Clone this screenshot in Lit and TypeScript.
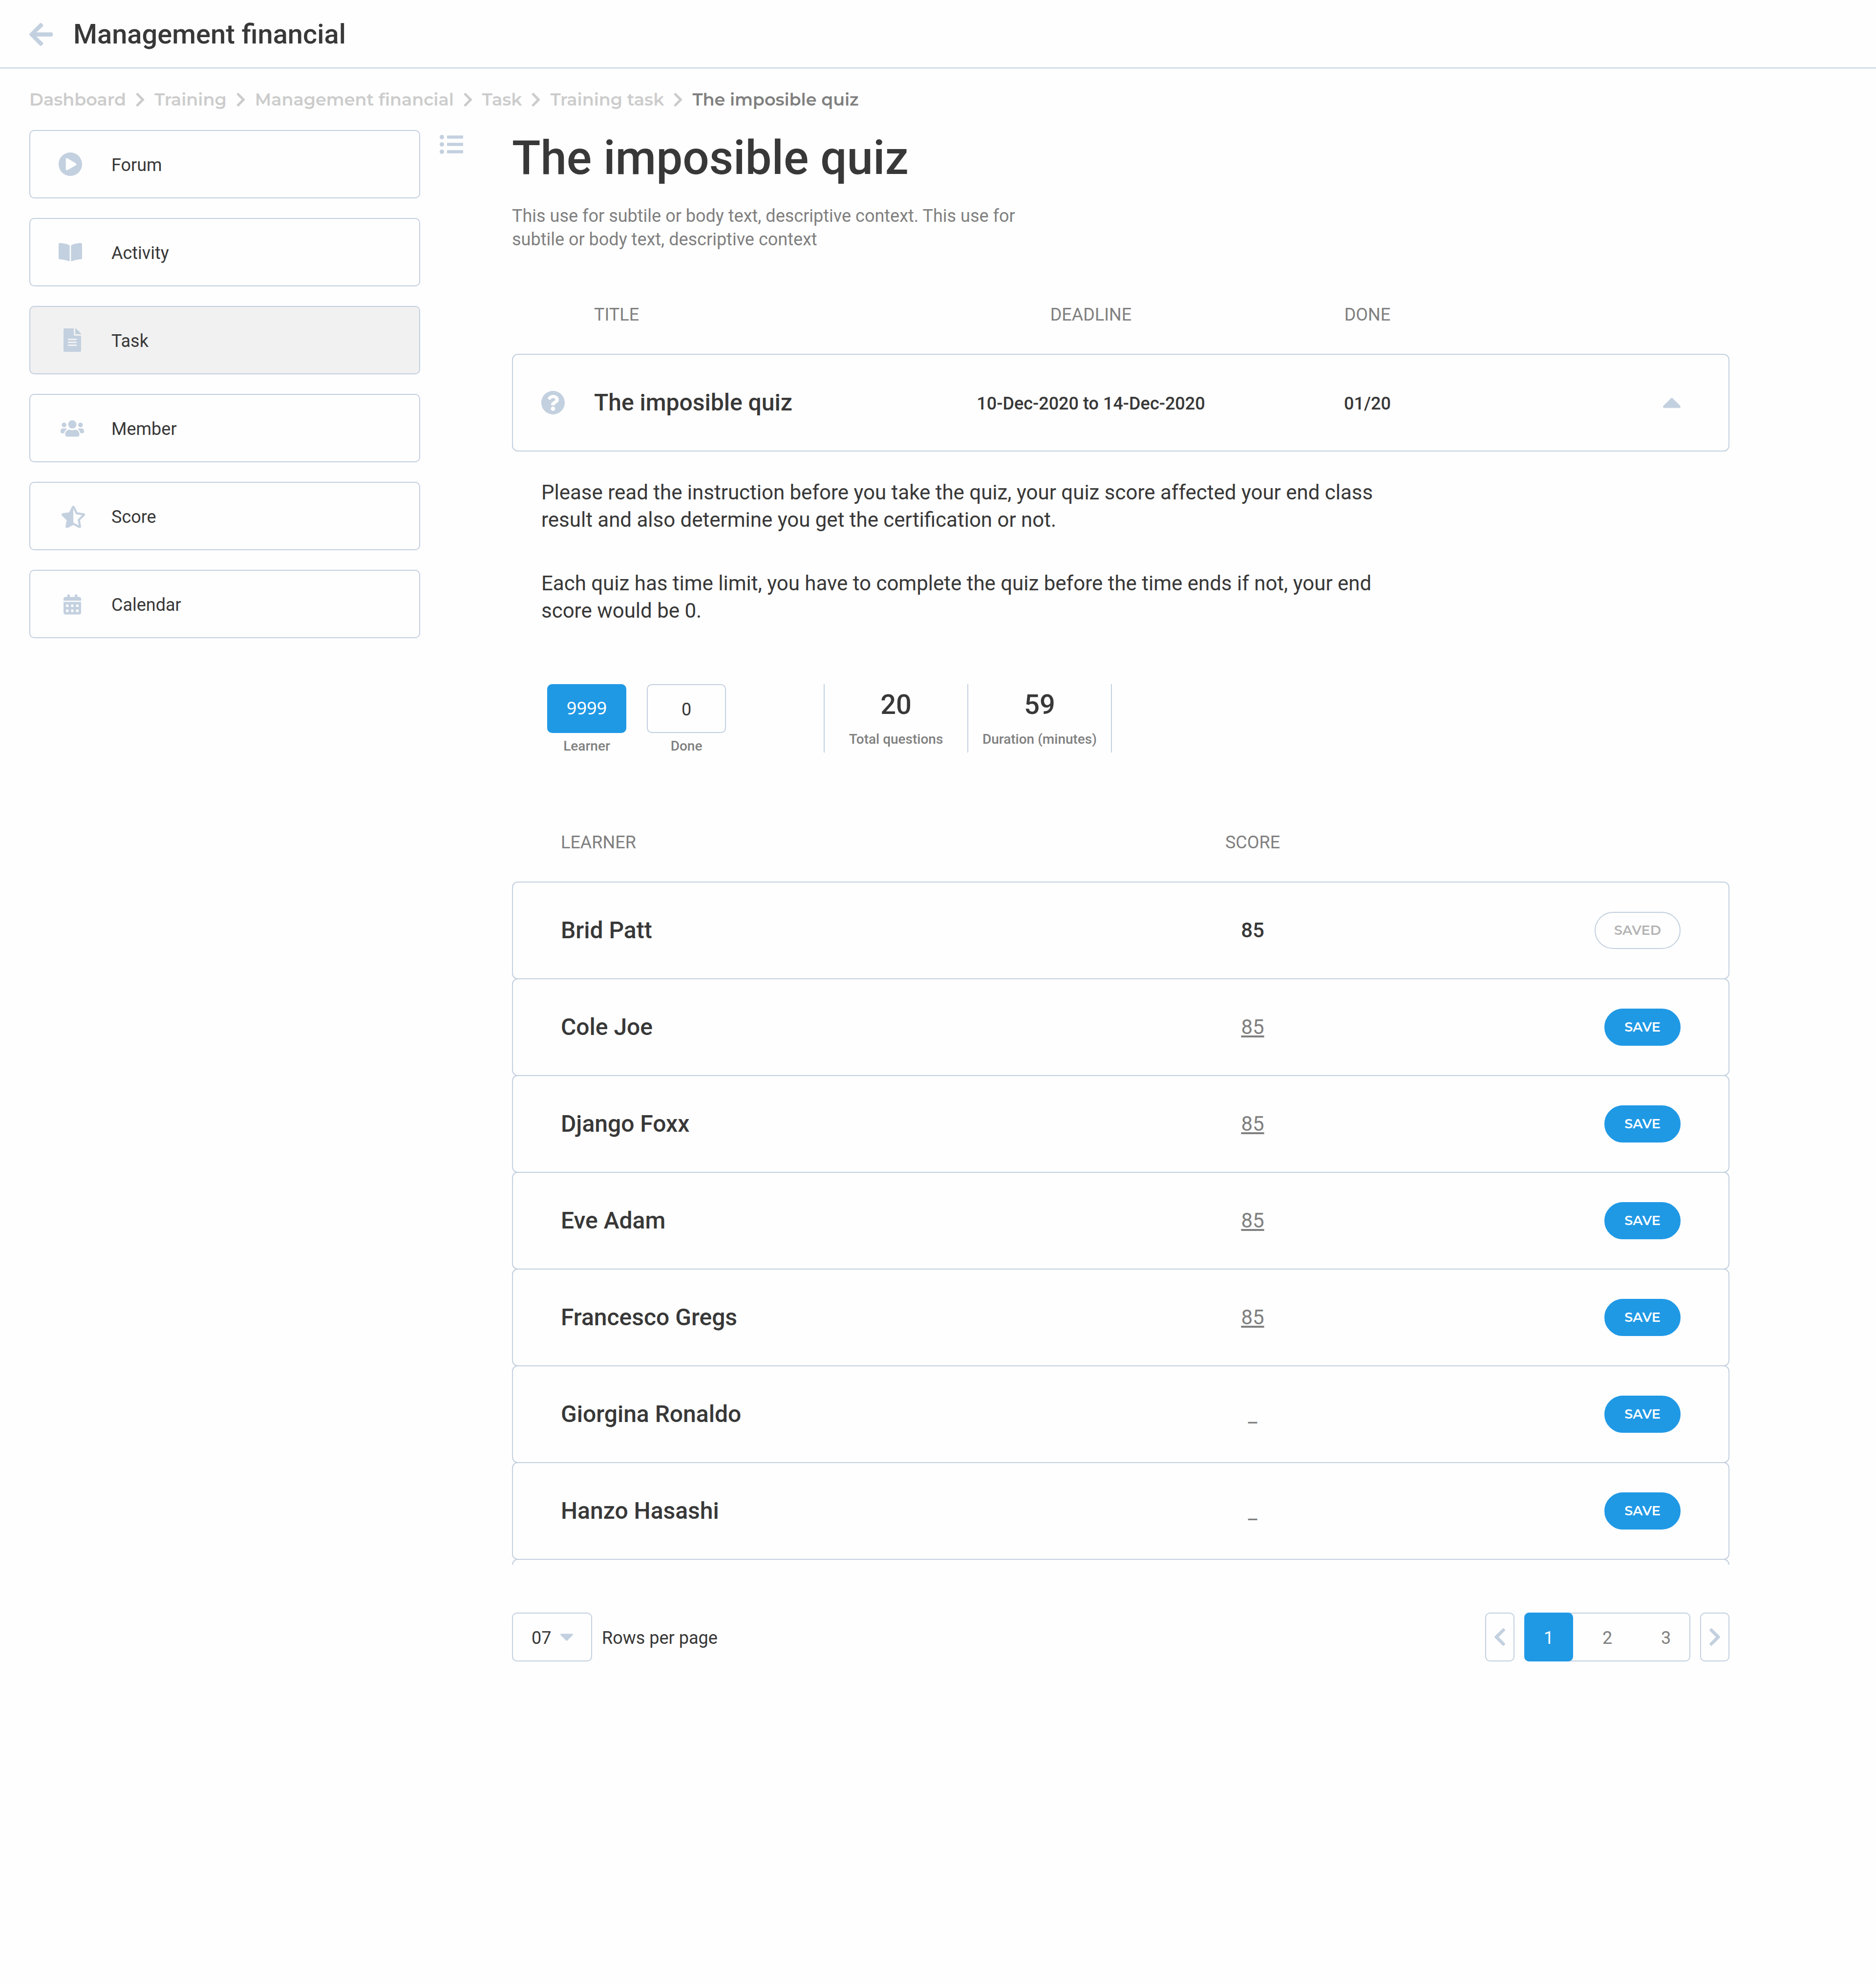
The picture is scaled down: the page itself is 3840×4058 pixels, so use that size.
import { LitElement, html, css, svg, nothing } from "lit";
import { customElement, state } from "lit/decorators.js";
import { classMap } from "lit/directives/class-map.js";

interface Learner {
  name: string;
  score: string;
  saved: boolean;
}

const CHEVRON =
  "M285.476 272.971L91.132 467.314c-9.373 9.373-24.569 9.373-33.941 0l-22.667-22.667c-9.357-9.357-9.375-24.522-.04-33.901L188.505 256 34.484 101.255c-9.335-9.379-9.317-24.544.04-33.901l22.667-22.667c9.373-9.373 24.569-9.373 33.941 0L285.475 239.03c9.373 9.372 9.373 24.568.001 33.941z";

const chevron = (cls: string, flip = false) => html`
  <svg class=${cls} viewBox="27 37 266 438" aria-hidden="true">
    <path d=${CHEVRON} transform=${flip ? "translate(320 0) scale(-1 1)" : nothing} />
  </svg>
`;

const DAY = "c0-6.6 5.4-12 12-12h40c6.6 0 12 5.4 12 12v40c0 6.6-5.4 12-12 12h-40c-6.6 0-12-5.4-12-12v-40z";

/* Menu icons share a 56 by 48 box, one unit to the pixel. */
const MENU = [
  {
    label: "Forum",
    icon: svg`<path transform="translate(-0.77 -0.77) scale(0.09677)" d="M256 8C119 8 8 119 8 256s111 248 248 248 248-111 248-248S393 8 256 8zm115.7 272l-176 101c-15.8 8.8-35.7-2.5-35.7-21V152c0-18.4 19.8-29.8 35.7-21l176 107c16.4 9.2 16.4 32.9 0 42z"/>`,
  },
  {
    label: "Activity",
    icon: svg`<path transform="translate(0 2.7) scale(0.08333)" d="M542.22 32.05c-54.8 3.11-163.72 14.43-230.96 55.59-4.64 2.84-7.27 7.89-7.27 13.17v363.87c0 11.55 12.63 18.85 23.28 13.49 69.18-34.82 169.23-44.32 218.7-46.92 16.89-.89 30.02-14.43 30.02-30.66V62.75c.01-17.71-15.35-31.74-33.77-30.7zM264.73 87.64C197.5 46.48 88.58 35.17 33.78 32.05 15.36 31.01 0 45.04 0 62.75V400.6c0 16.24 13.13 29.78 30.02 30.66 49.49 2.6 149.59 12.11 218.77 46.95 10.62 5.35 23.21-1.94 23.21-13.46V100.63c0-5.29-2.62-10.14-7.27-12.99z"/>`,
  },
  {
    label: "Task",
    icon: svg`<path transform="translate(10 0) scale(0.09375)" d="M224 136V0H24C10.7 0 0 10.7 0 24v464c0 13.3 10.7 24 24 24h336c13.3 0 24-10.7 24-24V160H248c-13.2 0-24-10.8-24-24zm64 236c0 6.6-5.4 12-12 12H108c-6.6 0-12-5.4-12-12v-8c0-6.6 5.4-12 12-12h168c6.6 0 12 5.4 12 12v8zm0-64c0 6.6-5.4 12-12 12H108c-6.6 0-12-5.4-12-12v-8c0-6.6 5.4-12 12-12h168c6.6 0 12 5.4 12 12v8zm0-72v8c0 6.6-5.4 12-12 12H108c-6.6 0-12-5.4-12-12v-8c0-6.6 5.4-12 12-12h168c6.6 0 12 5.4 12 12zm96-114.1v6.1H256V0h6.1c6.4 0 12.5 2.5 17 7l97.9 98c4.5 4.5 7 10.6 7 16.9z"/>`,
  },
  {
    label: "Member",
    icon: svg`<path transform="translate(4 5.6) scale(0.075)" d="M96 224c35.3 0 64-28.7 64-64s-28.7-64-64-64-64 28.7-64 64 28.7 64 64 64zm448 0c35.3 0 64-28.7 64-64s-28.7-64-64-64-64 28.7-64 64 28.7 64 64 64zm32 32h-64c-17.6 0-33.5 7.1-45.1 18.6 40.3 22.1 68.9 62 75.1 109.4h66c17.7 0 32-14.3 32-32v-32c0-35.3-28.7-64-64-64zm-256 0c61.9 0 112-50.1 112-112S381.9 32 320 32 208 82.1 208 144s50.1 112 112 112zm76.8 32h-8.3c-20.8 10-43.9 16-68.5 16s-47.6-6-68.5-16h-8.3C179.6 288 128 339.6 128 403.2V432c0 26.5 21.5 48 48 48h288c26.5 0 48-21.5 48-48v-28.8c0-63.6-51.6-115.2-115.2-115.2zm-223.7-13.4C161.5 263.1 145.6 256 128 256H64c-35.3 0-64 28.7-64 64v32c0 17.7 14.3 32 32 32h65.9c6.3-47.4 34.9-87.3 75.2-109.4z"/>`,
  },
  {
    label: "Score",
    icon: svg`<path transform="translate(6 3) scale(0.08955)" d="M508.55 171.51L362.18 150.2 296.77 17.81C290.89 5.98 279.42 0 267.95 0c-11.4 0-22.79 5.9-28.69 17.81l-65.43 132.38-146.38 21.29c-26.25 3.8-36.77 36.09-17.74 54.59l105.89 103-25.06 145.48C86.98 495.33 103.57 512 122.15 512c4.93 0 10-1.17 14.87-3.75l130.95-68.68 130.94 68.7c4.86 2.55 9.92 3.71 14.83 3.71 18.6 0 35.22-16.61 31.66-37.4l-25.03-145.49 105.91-102.98c19.04-18.5 8.52-50.8-17.73-54.6zm-121.74 123.2l-18.12 17.62 4.28 24.88 19.52 113.45-102.13-53.59-22.38-11.74.03-317.19 51.03 103.29 11.18 22.63 25.01 3.64 114.23 16.63-82.65 80.38z"/>`,
  },
  {
    label: "Calendar",
    icon: svg`<path transform="translate(10 4.4) scale(0.08036)" fill-rule="evenodd" d="M0 464c0 26.5 21.5 48 48 48h352c26.5 0 48-21.5 48-48V192H0v272zM320 268${DAY}M320 396${DAY}M192 268${DAY}M192 396${DAY}M64 268${DAY}M64 396${DAY}M400 64h-48V16c0-8.8-7.2-16-16-16h-32c-8.8 0-16 7.2-16 16v48H160V16c0-8.8-7.2-16-16-16h-32c-8.8 0-16 7.2-16 16v48H48C21.5 64 0 85.5 0 112v48h448v-48c0-26.5-21.5-48-48-48z"/>`,
  },
];

const CRUMBS = ["Dashboard", "Training", "Management financial", "Task", "Training task"];

@customElement("app-root")
export class AppRoot extends LitElement {
  @state() private page = 1;

  @state() private section = "Task";

  @state() private learners: Learner[] = [
    { name: "Brid Patt", score: "85", saved: true },
    { name: "Cole Joe", score: "85", saved: false },
    { name: "Django Foxx", score: "85", saved: false },
    { name: "Eve Adam", score: "85", saved: false },
    { name: "Francesco Gregs", score: "85", saved: false },
    { name: "Giorgina Ronaldo", score: "_", saved: false },
    { name: "Hanzo Hasashi", score: "_", saved: false },
  ];

  static styles = css`
    :host {
      --line: #c3d0df;
      --ink: #383838;
      --muted: #808080;
      --blue: #2099e5;
      display: block;
      min-height: 100vh;
      background: #fefefe;
      color: var(--ink);
      font-family: Roboto, "Liberation Sans", sans-serif;
      font-size: 36px;
      line-height: 48px;
    }
    *, *::before, *::after { box-sizing: border-box; }
    h1, h2, p, ul, ol, dl, dd { margin: 0; padding: 0; }
    ul, ol { list-style: none; }
    button, select, input { font: inherit; color: inherit; margin: 0; }
    button { cursor: pointer; background: none; border: 0; padding: 0; }
    svg { display: block; fill: var(--line); flex: none; }
    a { color: inherit; text-decoration: none; }

    .topbar {
      display: flex;
      align-items: center;
      gap: 42px;
      height: 140px;
      padding: 2px 60px 0;
      border-bottom: 2px solid var(--line);
    }
    .back-icon { width: 48px; height: 47px; }
    .topbar-title { font-size: 56px; line-height: 64px; font-weight: 500; }

    .crumbs {
      display: flex;
      flex-wrap: wrap;
      align-items: center;
      gap: 20px;
      padding: 40px 60px 38px;
      font-family: Montserrat, Inter, sans-serif;
      font-size: 35px;
      font-weight: 600;
      color: #cccccc;
    }
    .crumb { display: flex; align-items: center; gap: 20px; }
    .crumb-icon { width: 18px; height: 28px; fill: #cccccc; }
    .crumb-current { color: var(--muted); }

    .layout { display: flex; align-items: flex-start; padding: 0 300px 0 60px; }
    .menu { flex: 0 1 800px; display: flex; flex-direction: column; gap: 40px; }
    .menu-item {
      display: flex;
      align-items: center;
      gap: 52px;
      height: 140px;
      padding: 0 58px;
      border: 2px solid var(--line);
      border-radius: 10px;
    }
    .menu-item.active { background: #f1f1f1; }
    .menu-icon { width: 56px; height: 48px; }
    .menu-label { padding-top: 4px; }
    .collapse { margin: 10px 100px 0 40px; }
    .collapse-icon { width: 48px; height: 40px; }
    .content { flex: 1; min-width: 0; }

    .title { font-size: 96px; line-height: 114px; font-weight: 500; }
    .subtitle { max-width: 1060px; margin-top: 38px; color: var(--muted); }

    table, thead, tbody { display: block; }
    tr { display: grid; align-items: center; border: 2px solid transparent; }
    th, td { padding: 0; text-align: center; }
    th { font-weight: 400; color: var(--muted); }
    thead tr { margin-bottom: 56px; border-width: 0 2px; }
    tbody tr { height: 200px; border-color: var(--line); border-radius: 12px; }
    tbody tr + tr { margin-top: -2px; }

    .quiz { margin-top: 106px; }
    .quiz tr { grid-template-columns: 900fr 566fr 566fr 456fr; }
    .quiz th:first-child { text-align: left; padding-left: 166px; }
    .quiz td { font-weight: 500; }
    .quiz-fact { padding-top: 4px; }
    .quiz-name {
      display: flex;
      align-items: center;
      gap: 60px;
      padding-left: 58px;
      font-size: 48px;
      line-height: 56px;
    }
    .quiz-icon { width: 48px; height: 48px; }
    .toggle-cell { display: flex; justify-content: flex-end; padding-right: 98px; }
    .toggle-icon { width: 36px; height: 21px; }

    .intro {
      display: flex;
      flex-direction: column;
      gap: 74px;
      max-width: 1820px;
      padding: 56px 0 0 60px;
      font-size: 42px;
      line-height: 56px;
    }

    .summary { display: flex; align-items: flex-start; gap: 200px; margin-top: 122px; padding-left: 72px; }
    .counts { display: flex; gap: 42px; }
    .count { display: flex; flex-direction: column; align-items: center; gap: 10px; }
    .count-box {
      width: 162px;
      height: 100px;
      padding-top: 4px;
      border: 2px solid var(--line);
      border-radius: 10px;
    }
    .count-box.on {
      padding: 0 0 2px;
      background: var(--blue);
      border-color: var(--blue);
      color: #ffffff;
      font-family: "Noto Sans", sans-serif;
    }
    .caption { font-size: 28px; line-height: 34px; font-weight: 500; color: var(--muted); }
    .stats { display: flex; border-left: 2px solid var(--line); }
    .stat {
      display: flex;
      flex-direction: column-reverse;
      justify-content: flex-end;
      align-items: center;
      gap: 22px;
      width: 294px;
      height: 140px;
      padding-top: 10px;
      border-right: 2px solid var(--line);
    }
    .stat-value { font-size: 56px; line-height: 64px; font-weight: 500; }

    .learners { margin-top: 156px; }
    .learners tr { grid-template-columns: 1264fr 500fr 724fr; }
    .learners th:first-child, .learner-name { text-align: left; padding-left: 98px; }
    .learner-name { font-size: 48px; line-height: 56px; font-weight: 500; }
    .score { font-size: 42px; line-height: 56px; }
    .score-final { font-weight: 500; }
    .score-input {
      width: 120px;
      height: 56px;
      padding: 0;
      border: 0;
      background: none;
      text-align: center;
      color: var(--muted);
      text-decoration: underline;
    }
    .score-input.blank { padding-top: 8px; text-decoration: none; }
    .action { display: flex; justify-content: flex-end; padding-right: 98px; }
    .pill {
      min-width: 156px;
      height: 76px;
      padding: 0 34px;
      border: 2px solid var(--blue);
      border-radius: 38px;
      background: var(--blue);
      color: #ffffff;
      font-family: Montserrat, Inter, sans-serif;
      font-size: 27px;
      line-height: 32px;
      font-weight: 600;
    }
    .pill.done { min-width: 176px; background: none; border-color: var(--line); color: #b3b3b3; }
    .next-edge {
      height: 12px;
      margin-top: -2px;
      border: 2px solid var(--line);
      border-bottom: 0;
      border-radius: 12px 12px 0 0;
    }

    .footer { display: flex; justify-content: space-between; align-items: center; margin-top: 98px; }
    .rows { display: flex; align-items: center; gap: 20px; }
    .rows-box { position: relative; }
    .rows-select {
      appearance: none;
      width: 164px;
      height: 100px;
      padding: 4px 0 0 38px;
      border: 2px solid var(--line);
      border-radius: 10px;
      background: none;
    }
    .rows-label { padding-top: 4px; }
    .rows-icon { position: absolute; right: 39px; top: 43px; width: 26px; height: 15px; pointer-events: none; }
    .pager { display: flex; gap: 20px; }
    .step {
      display: flex;
      align-items: center;
      justify-content: center;
      width: 60px;
      height: 100px;
      border: 2px solid var(--line);
      border-radius: 10px;
    }
    .step-icon { width: 22px; height: 36px; }
    .pages { display: flex; gap: 20px; border-radius: 10px; box-shadow: inset 0 0 0 2px var(--line); }
    .page { width: 100px; height: 100px; padding-top: 4px; border-radius: 10px; color: var(--muted); }
    .page.on { background: var(--blue); color: #ffffff; }
  `;

  private save(index: number) {
    this.learners = this.learners.map((l, i) => (i === index ? { ...l, saved: true } : l));
  }

  private edit(index: number, event: Event) {
    const score = (event.target as HTMLInputElement).value;
    this.learners = this.learners.map((l, i) => (i === index ? { ...l, score } : l));
  }

  private renderLearner(l: Learner, i: number) {
    return html`
      <tr>
        <td class="learner-name">${l.name}</td>
        <td class="score">
          ${l.saved
            ? html`<span class="score-final">${l.score}</span>`
            : html`<input
                class=${classMap({ "score-input": true, blank: l.score === "_" })}
                type="text"
                aria-label="Score"
                .value=${l.score}
                @change=${(e: Event) => this.edit(i, e)}
              />`}
        </td>
        <td class="action">
          ${l.saved
            ? html`<button class="pill done" type="button">SAVED</button>`
            : html`<button class="pill" type="button" @click=${() => this.save(i)}>SAVE</button>`}
        </td>
      </tr>
    `;
  }

  render() {
    return html`
      <header class="topbar">
        <button type="button" aria-label="Back">
          <svg class="back-icon" viewBox="0 37 448 438" aria-hidden="true">
            <path d="M257.5 445.1l-22.2 22.2c-9.4 9.4-24.6 9.4-33.9 0L7 273c-9.4-9.4-9.4-24.6 0-33.9L201.4 44.7c9.4-9.4 24.6-9.4 33.9 0l22.2 22.2c9.5 9.5 9.3 25-.4 34.3L136.6 216H424c13.3 0 24 10.7 24 24v32c0 13.3-10.7 24-24 24H136.6l120.5 114.8c9.8 9.3 10 24.8.4 34.3z" />
          </svg>
        </button>
        <h2 class="topbar-title">Management financial</h2>
      </header>

      <nav aria-label="Breadcrumb">
        <ol class="crumbs">
          ${CRUMBS.map((c) => html`<li class="crumb"><a href="#">${c}</a>${chevron("crumb-icon")}</li>`)}
          <li class="crumb-current" aria-current="page">The imposible quiz</li>
        </ol>
      </nav>

      <div class="layout">
        <nav class="menu" aria-label="Sections">
          ${MENU.map(
            (m) => html`
              <a
                class=${classMap({ "menu-item": true, active: m.label === this.section })}
                href="#"
                @click=${() => (this.section = m.label)}
              >
                <svg class="menu-icon" viewBox="0 0 56 48" aria-hidden="true">${m.icon}</svg>
                <span class="menu-label">${m.label}</span>
              </a>
            `
          )}
        </nav>

        <button class="collapse" type="button" aria-label="Toggle menu">
          <svg class="collapse-icon" viewBox="0 0 48 40" aria-hidden="true">
            ${[4.5, 19.5, 34.5].map(
              (y) => svg`<circle cx="4.5" cy=${y} r="4.5" /><rect x="15" y=${y - 3.2} width="33" height="6.4" rx="1" />`
            )}
          </svg>
        </button>

        <main class="content">
          <h1 class="title">The imposible quiz</h1>
          <p class="subtitle">
            This use for subtile or body text, descriptive context. This use for subtile or body text, descriptive context
          </p>

          <table class="quiz">
            <thead>
              <tr><th>TITLE</th><th>DEADLINE</th><th>DONE</th></tr>
            </thead>
            <tbody>
              <tr>
                <td class="quiz-name">
                  <svg class="quiz-icon" viewBox="8 8 496 496" aria-hidden="true">
                    <path d="M504 256c0 136.997-111.043 248-248 248S8 392.997 8 256C8 119.083 119.043 8 256 8s248 111.083 248 248zM262.655 90c-54.497 0-89.255 22.957-116.549 63.758-3.536 5.286-2.353 12.415 2.715 16.258l34.699 26.31c5.205 3.947 12.621 3.008 16.665-2.122 17.864-22.658 30.113-35.797 57.303-35.797 20.429 0 45.698 13.148 45.698 32.958 0 14.976-12.363 22.667-32.534 33.976C247.128 238.528 216 254.941 216 296v4c0 6.627 5.373 12 12 12h56c6.627 0 12-5.373 12-12v-1.333c0-28.462 83.186-29.647 83.186-106.667 0-58.002-60.165-102-116.531-102zM256 338c-25.365 0-46 20.635-46 46 0 25.364 20.635 46 46 46s46-20.636 46-46c0-25.365-20.635-46-46-46z" />
                  </svg>
                  <span>The imposible quiz</span>
                </td>
                <td class="quiz-fact">10-Dec-2020 to 14-Dec-2020</td>
                <td class="quiz-fact">01/20</td>
                <td class="toggle-cell">
                  <button type="button" aria-label="Collapse" aria-expanded="true">
                    <svg class="toggle-icon" viewBox="11 183 298 169" aria-hidden="true">
                      <path d="M288.662 352H31.338c-17.818 0-26.741-21.543-14.142-34.142l128.662-128.662c7.81-7.81 20.474-7.81 28.284 0l128.662 128.662c12.6 12.599 3.676 34.142-14.142 34.142z" />
                    </svg>
                  </button>
                </td>
              </tr>
            </tbody>
          </table>

          <div class="intro">
            <p>
              Please read the instruction before you take the quiz, your quiz score affected your end class result and
              also determine you get the certification or not.
            </p>
            <p>
              Each quiz has time limit, you have to complete the quiz before the time ends if not, your end score would
              be 0.
            </p>
          </div>

          <div class="summary">
            <div class="counts">
              <div class="count">
                <button class="count-box on" type="button" aria-labelledby="c1">9999</button>
                <span class="caption" id="c1">Learner</span>
              </div>
              <div class="count">
                <button class="count-box" type="button" aria-labelledby="c2">0</button>
                <span class="caption" id="c2">Done</span>
              </div>
            </div>
            <dl class="stats">
              <div class="stat">
                <dt class="caption">Total questions</dt>
                <dd class="stat-value">20</dd>
              </div>
              <div class="stat">
                <dt class="caption">Duration (minutes)</dt>
                <dd class="stat-value">59</dd>
              </div>
            </dl>
          </div>

          <table class="learners">
            <thead>
              <tr><th>LEARNER</th><th>SCORE</th></tr>
            </thead>
            <tbody>
              ${this.learners.map((l, i) => this.renderLearner(l, i))}
            </tbody>
          </table>
          <div class="next-edge"></div>

          <div class="footer">
            <div class="rows">
              <div class="rows-box">
                <select class="rows-select" id="rows">
                  <option>07</option>
                </select>
                <svg class="rows-icon" viewBox="11 192 298 169" aria-hidden="true">
                  <path d="M31.3 192h257.3c17.8 0 26.7 21.5 14.1 34.1L174.1 354.8c-7.8 7.8-20.5 7.8-28.3 0L17.2 226.1C4.6 213.5 13.5 192 31.3 192z" />
                </svg>
              </div>
              <label class="rows-label" for="rows">Rows per page</label>
            </div>
            <nav class="pager" aria-label="Pages">
              <button class="step" type="button" aria-label="Previous page">${chevron("step-icon", true)}</button>
              <div class="pages">
                ${[1, 2, 3].map(
                  (n) => html`
                    <button
                      class=${classMap({ page: true, on: n === this.page })}
                      type="button"
                      @click=${() => (this.page = n)}
                    >${n}</button>
                  `
                )}
              </div>
              <button class="step" type="button" aria-label="Next page">${chevron("step-icon")}</button>
            </nav>
          </div>
        </main>
      </div>
    `;
  }
}
